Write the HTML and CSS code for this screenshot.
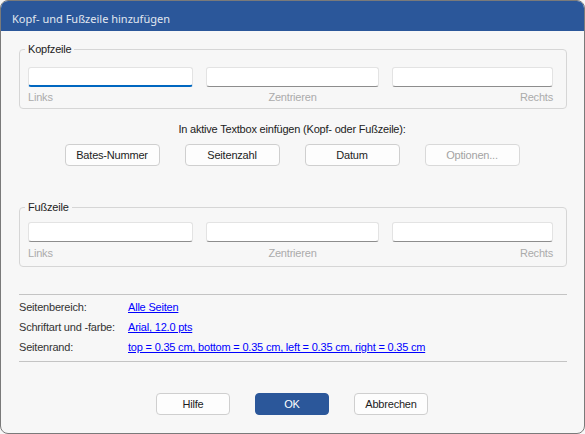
FILE: index.html
```html
<!DOCTYPE html>
<html lang="de">
<head>
  <meta charset="UTF-8">
  <title>Kopf- und Fußzeile hinzufügen</title>
  <link rel="stylesheet" href="styles.css">
</head>
<body>
  <div class="window">
    <div class="titlebar">Kopf- und Fußzeile hinzufügen</div>
    <div class="content">
      <fieldset class="group group-head">
        <legend>Kopfzeile</legend>
        <div class="fields">
          <input type="text" class="field focused">
          <input type="text" class="field">
          <input type="text" class="field">
          <span class="hint left">Links</span>
          <span class="hint center">Zentrieren</span>
          <span class="hint right">Rechts</span>
        </div>
      </fieldset>

      <div class="insert">
        <div class="insert-label">In aktive Textbox einfügen (Kopf- oder Fußzeile):</div>
        <div class="insert-buttons">
          <button class="btn">Bates-Nummer</button>
          <button class="btn">Seitenzahl</button>
          <button class="btn">Datum</button>
          <button class="btn" disabled>Optionen...</button>
        </div>
      </div>

      <fieldset class="group group-foot">
        <legend>Fußzeile</legend>
        <div class="fields">
          <input type="text" class="field">
          <input type="text" class="field">
          <input type="text" class="field">
          <span class="hint left">Links</span>
          <span class="hint center">Zentrieren</span>
          <span class="hint right">Rechts</span>
        </div>
      </fieldset>

      <div class="separator sep-top"></div>
      <div class="settings">
        <div class="setting">
          <span class="setting-label">Seitenbereich:</span>
          <a href="#" class="setting-link">Alle Seiten</a>
        </div>
        <div class="setting">
          <span class="setting-label">Schriftart und -farbe:</span>
          <a href="#" class="setting-link">Arial, 12.0 pts</a>
        </div>
        <div class="setting">
          <span class="setting-label">Seitenrand:</span>
          <a href="#" class="setting-link">top = 0.35 cm, bottom = 0.35 cm, left = 0.35 cm, right = 0.35 cm</a>
        </div>
      </div>
      <div class="separator sep-bottom"></div>

      <div class="actions">
        <button class="btn btn-small">Hilfe</button>
        <button class="btn btn-small btn-primary">OK</button>
        <button class="btn btn-small">Abbrechen</button>
      </div>
    </div>
  </div>
</body>
</html>
```

FILE: styles.css
```css
body {
  margin: 0;
  background: #f7f7f7;
  font-family: 'Liberation Sans', Arial, sans-serif;
  font-size: 11px;
  letter-spacing: -0.2px;
  color: #1c1c1c;
}
.window {
  width: 585px;
  height: 434px;
  box-sizing: border-box;
  border: 1px solid #7a7a7a;
  border-radius: 8px;
  overflow: hidden;
  background: #f7f7f7;
  display: flex;
  flex-direction: column;
}
.titlebar {
  height: 30px;
  box-sizing: border-box;
  padding: 5px 0 0 11px;
  line-height: 25px;
  background: #2b579a;
  color: #e1e7f0;
  font-family: 'Noto Sans', sans-serif;
  font-size: 11px;
  letter-spacing: 0;
}
.content {
  padding: 0 17px 0 18px;
  display: flex;
  flex-direction: column;
}
.group {
  margin: 0;
  border: 1px solid #d6d6d6;
  border-radius: 4px;
  padding: 0 13px 0 8px;
  min-width: 0;
}
.group legend {
  margin-left: -3px;
  padding: 0 3px;
  line-height: 14px;
  color: #222;
}
.group-head {
  margin-top: 11px;
  padding-bottom: 4px;
}
.group-head .fields {
  margin-top: 11px;
}
.group-head .hint {
  margin-top: 3px;
}
.group-foot {
  margin-top: 34px;
  padding-bottom: 6px;
}
.group-foot .fields {
  margin-top: 8px;
}
.group-foot .hint {
  margin-top: 4px;
}
.fields {
  display: grid;
  grid-template-columns: 165px 173px 161px;
  justify-content: space-between;
}
.field {
  height: 20px;
  box-sizing: border-box;
  margin: 0;
  padding: 0 4px;
  background: #fff;
  border: 1px solid #e3e3e3;
  border-bottom-color: #8d8d8d;
  border-radius: 3px;
  outline: none;
}
.field.focused {
  border-bottom: 2px solid #0067c0;
}
.hint {
  line-height: 14px;
  color: #ababab;
}
.hint.left {
  text-align: left;
}
.hint.center {
  text-align: center;
}
.hint.right {
  text-align: right;
}
.insert {
  margin-top: 13px;
  padding-right: 2px;
  display: flex;
  flex-direction: column;
  align-items: center;
}
.insert-label {
  line-height: 14px;
  color: #222;
}
.insert-buttons {
  margin-top: 8px;
  display: flex;
  gap: 25px;
}
.btn {
  width: 95px;
  height: 22px;
  box-sizing: border-box;
  margin: 0;
  padding: 0;
  background: #fdfdfd;
  border: 1px solid #cfcfcf;
  border-radius: 4px;
  font-family: inherit;
  font-size: 11px;
  letter-spacing: -0.2px;
  color: #1c1c1c;
}
.btn:disabled {
  color: #a3a3a3;
  border-color: #d9d9d9;
}
.btn-small {
  width: 74px;
}
.btn-primary {
  background: #2b579a;
  border-color: #2b579a;
  color: #fff;
}
.separator {
  height: 1px;
  background: #c4c4c4;
}
.sep-top {
  margin-top: 27px;
}
.settings {
  margin-top: 2px;
}
.setting {
  display: flex;
  line-height: 20px;
}
.setting-label {
  width: 109px;
  color: #333;
}
.setting-link {
  color: #0000ff;
}
.sep-bottom {
  margin-top: 4px;
}
.actions {
  margin-top: 31px;
  padding-right: 2px;
  display: flex;
  justify-content: center;
  gap: 25px;
}
```
